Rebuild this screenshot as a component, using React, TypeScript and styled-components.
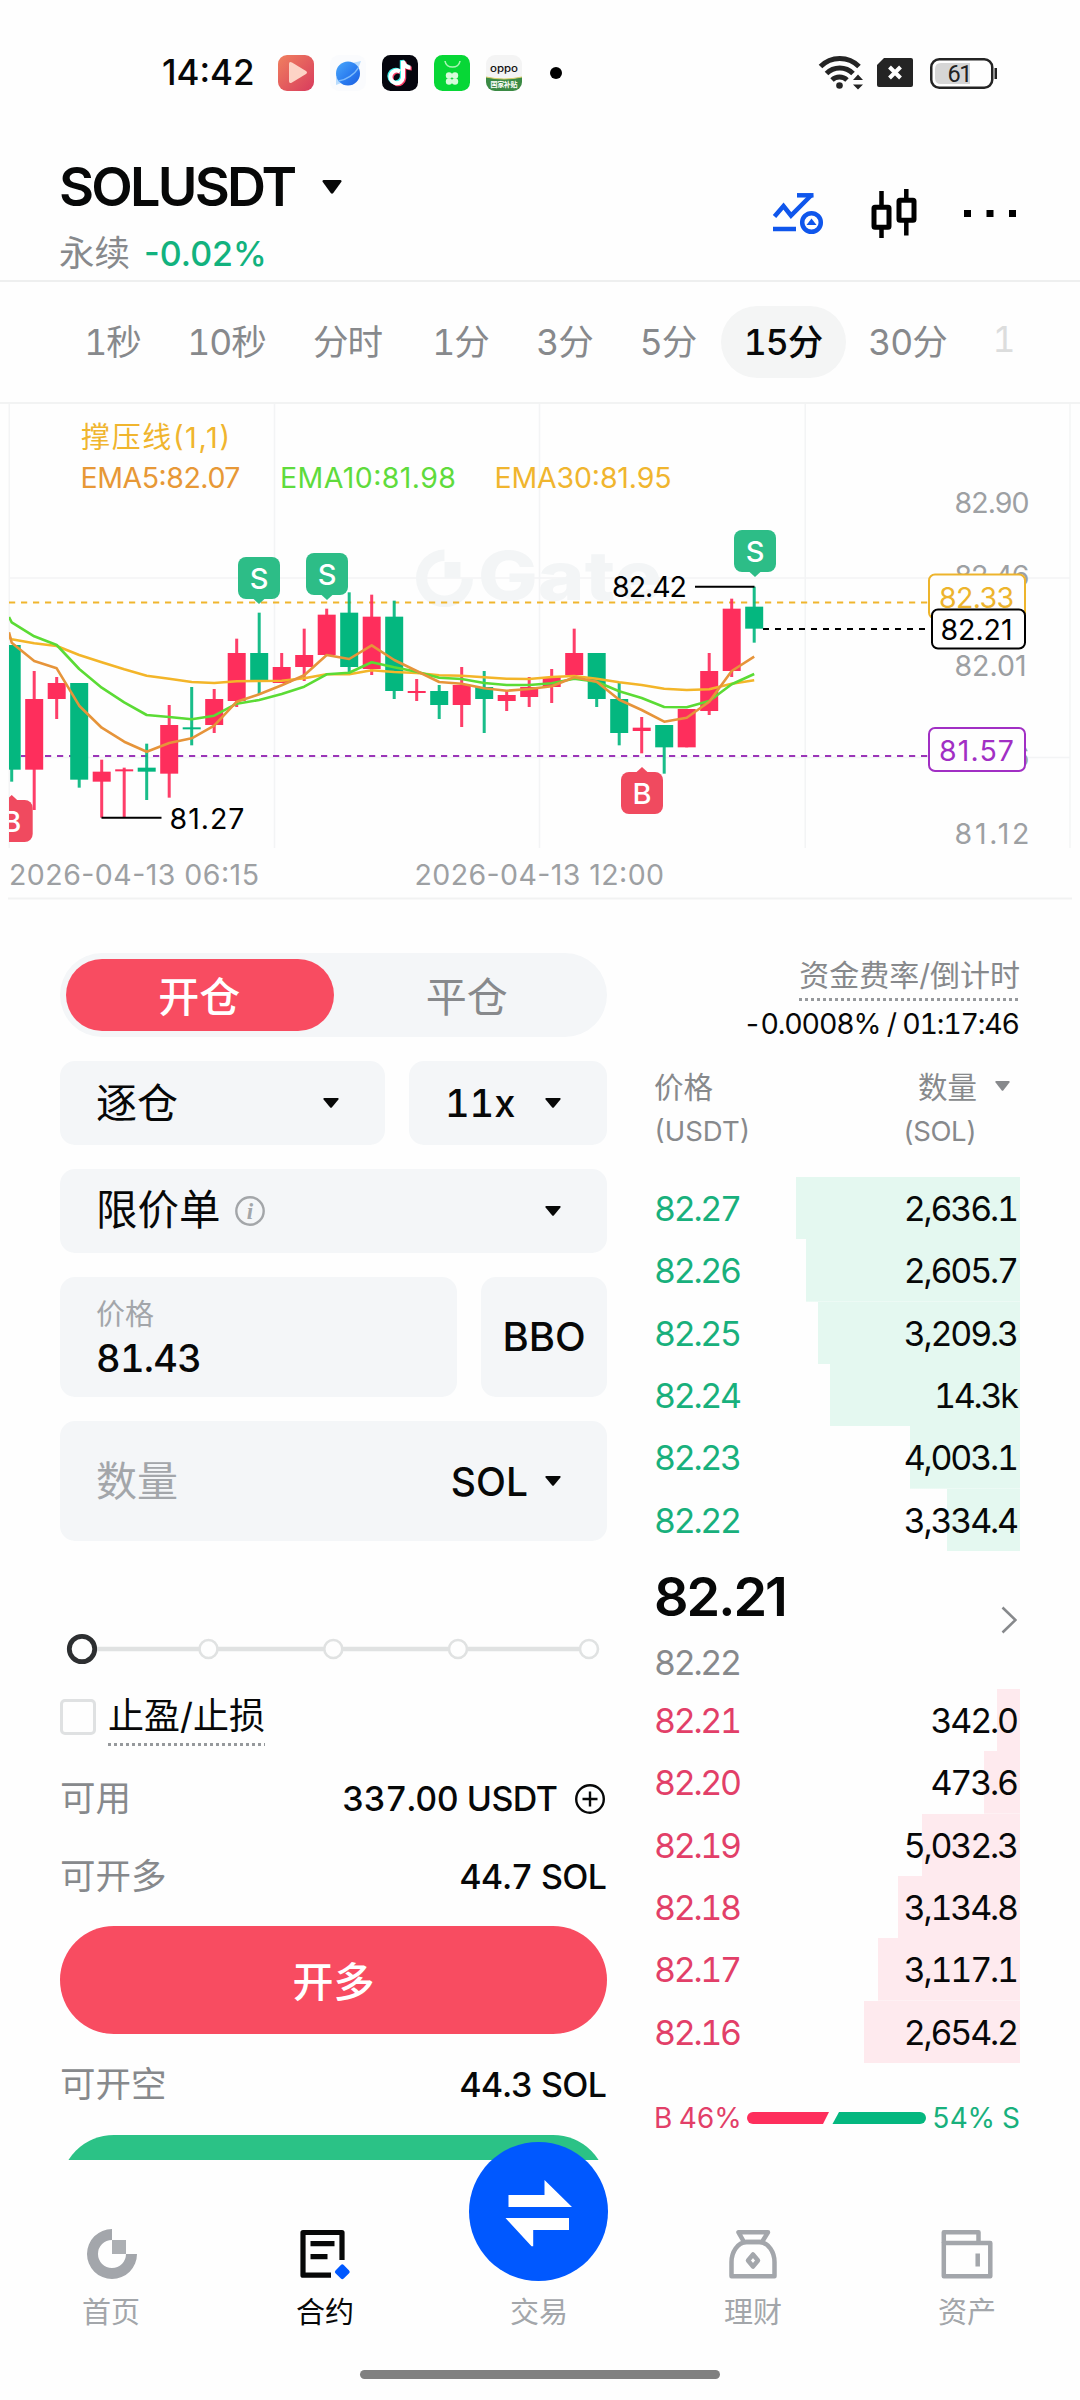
import React from "react";
import styled, { createGlobalStyle } from "styled-components";

const UP = "#04b77f";
const DOWN = "#fe2e5c";
const INK = "#070808";
const GRAY = "#87898c";
const MUTE = "#a3a6aa";
const FIELD = "#f4f6f8";

const Global = createGlobalStyle`
  *, *::before, *::after { box-sizing: border-box; }
  body {
    margin: 0;
    background: #fefefe;
    color: ${INK};
    font-family: Inter, "Noto Sans CJK SC", sans-serif;
    -webkit-font-smoothing: antialiased;
  }
  svg { display: block; flex: none; }
`;

const Screen = styled.div`
  width: 1080px;
  height: 2400px;
  display: flex;
  flex-direction: column;
  background: #fefefe;
  overflow: hidden;
`;

const Label = styled.span<{
  $size: number;
  $color?: string;
  $weight?: number;
  $ls?: number;
  $lh?: number;
  $proportional?: boolean;
}>`
  font-size: ${(p) => p.$size}px;
  line-height: ${(p) => p.$lh ?? p.$size}px;
  color: ${(p) => p.$color ?? INK};
  font-weight: ${(p) => p.$weight ?? 400};
  letter-spacing: ${(p) => p.$ls ?? 0}px;
  margin-right: ${(p) => -(p.$ls ?? 0)}px;
  white-space: nowrap;
  ${(p) => (p.$proportional ? "font-variant-numeric: normal;" : "")}
`;

/* ---------- status bar ---------- */

const StatusBar = styled.header`
  height: 145px;
  padding: 0 83px 0 162px;
  display: flex;
  align-items: center;
  justify-content: space-between;
`;
const StatusGroup = styled.div<{ $gap: number }>`
  display: flex;
  align-items: center;
  gap: ${(p) => p.$gap}px;
`;
const Clock = styled(Label)`
  width: 100px;
`;
const Dot = styled.span`
  width: 12px;
  height: 12px;
  margin-left: 12px;
  border-radius: 50%;
  background: #000;
`;

function AppIcons() {
  return (
    <>
      <svg width="36" height="36" viewBox="0 0 36 36">
        <defs>
          <linearGradient id="play" x1="0" y1="0" x2="1" y2="1">
            <stop offset="0" stopColor="#f0805f" />
            <stop offset="1" stopColor="#d83b5d" />
          </linearGradient>
        </defs>
        <rect width="36" height="36" rx="9" fill="url(#play)" />
        <path d="M11 9q0-3 3-1.500l14 8.500q2 1.500 0 3l-14 8.500q-3 1.500-3-1.500z" fill="#fdd3c6" />
      </svg>
      <svg width="36" height="36" viewBox="0 0 36 36">
        <defs>
          <linearGradient id="planet" x1="0" y1="0" x2="1" y2="1">
            <stop offset="0" stopColor="#4aa8fb" />
            <stop offset="0.55" stopColor="#2b7df0" />
            <stop offset="1" stopColor="#1b5fe0" />
          </linearGradient>
        </defs>
        <rect width="36" height="36" rx="9" fill="#fafbfd" />
        <path d="M22 8l9-2-3 8zM6 22l0 8 8-3z" fill="#b9dcfd" />
        <circle cx="18" cy="18.500" r="12" fill="url(#planet)" />
        <path d="M8.500 26C16 25 25 19 28.500 12.500" stroke="#7dbbfb" strokeWidth="1.500" fill="none" />
      </svg>
      <svg width="36" height="36" viewBox="0 0 36 36">
        <rect width="36" height="36" rx="8.500" fill="#05060e" />
        <g fill="none" strokeWidth="4">
          <path d="M18 16.500a6.300 6.300 0 1 0 3 6V6c1 4 4 6.500 7.500 6.500" stroke="#fd3f68" transform="translate(1.200 1)" />
          <path d="M18 16.500a6.300 6.300 0 1 0 3 6V6c1 4 4 6.500 7.500 6.500" stroke="#3ff0ea" transform="translate(-1.200 -.8)" />
          <path d="M18 16.500a6.300 6.300 0 1 0 3 6V6c1 4 4 6.500 7.500 6.500" stroke="#fff" />
        </g>
      </svg>
      <svg width="36" height="36" viewBox="0 0 36 36">
        <rect width="36" height="36" rx="8.500" fill="#07d736" />
        <path d="M11 6c1 8 14 8 15 0" stroke="#a9f5b5" strokeWidth="1.600" fill="none" />
        <g fill="#d9fbdc">
          <circle cx="15" cy="20.500" r="3.200" />
          <circle cx="21" cy="20.500" r="3.200" />
          <circle cx="15" cy="26.500" r="3.200" />
          <circle cx="21" cy="26.500" r="3.200" />
        </g>
      </svg>
      <svg width="36" height="36" viewBox="0 0 36 36">
        <clipPath id="oppo">
          <rect width="36" height="36" rx="9" />
        </clipPath>
        <g clipPath="url(#oppo)">
          <rect width="36" height="36" fill="#f4f4f4" />
          <path d="M0 22q18 4 36 0v14H0z" fill="#3b8a44" />
          <path d="M0 22q18 4 36 0" stroke="#d8cf6a" fill="none" />
          <text x="4" y="16.500" fontSize="9.500" fontWeight="500" textLength="28" lengthAdjust="spacingAndGlyphs" fill="#111">
            oppo
          </text>
          <text x="4.500" y="32" fontSize="7" fontWeight="700" textLength="27" fill="#fff">
            国家补贴
          </text>
        </g>
      </svg>
    </>
  );
}

function SystemIcons() {
  return (
    <svg width="180" height="36" viewBox="817 54 180 36">
      <g fill="none" stroke="#242424" strokeWidth="5">
        <path d="M820.500 65.500a27 27 0 0 1 38.500 0" />
        <path d="M826.500 72.500a18.500 18.500 0 0 1 26.500 0" />
        <path d="M832 79a11 11 0 0 1 15 0" />
      </g>
      <circle cx="839.500" cy="84.500" r="3.300" fill="#242424" />
      <path d="M853 79l5-5.500 5 5.500zM853 83.500h10l-5 5z" fill="#242424" />
      <path d="M884 57h27a2 2 0 0 1 2 2v25a2 2 0 0 1-2 2h-32a2 2 0 0 1-2-2V64z" fill="#242424" />
      <path d="M889.500 66l11 11M900.500 66l-11 11" stroke="#fff" strokeWidth="4" />
      <rect x="931.250" y="58.250" width="61" height="28.500" rx="8" fill="none" stroke="#242424" strokeWidth="2.500" />
      <path d="M941 62h29v21h-29q-6 0-6-6v-9q0-6 6-6z" fill="#d6d6d6" />
      <rect x="994.500" y="67" width="2.500" height="11" fill="#242424" />
      <text x="947.500" y="81" fontFamily="Roboto" fontSize="23.500" textLength="25" fill="#222">
        61
      </text>
    </svg>
  );
}

/* ---------- pair header ---------- */

const PairHeader = styled.section`
  height: 137px;
  padding: 12px 60px 0 59px;
  display: flex;
  justify-content: space-between;
  border-bottom: 2px solid #eeefef;
`;
const PairInfo = styled.div`
  display: flex;
  flex-direction: column;
  gap: 12px;
`;
const Line = styled.div<{ $gap: number }>`
  display: flex;
  align-items: center;
  gap: ${(p) => p.$gap}px;
`;
const HeaderIcons = styled.div`
  height: 60px;
  margin-top: 26px;
  display: flex;
  align-items: center;
`;

const Caret = ({ w = 16, h = 10, color = INK }: { w?: number; h?: number; color?: string }) => (
  <svg width={w} height={h} viewBox="0 0 16 10" preserveAspectRatio="none">
    <path d="M1.200 0h13.600q1.300.3.600 1.500L9 9.300q-1 1-2 0L.6 1.500Q-.1.300 1.200 0z" fill={color} />
  </svg>
);

/* ---------- interval tabs ---------- */

const Intervals = styled.nav`
  height: 122px;
  padding: 0 60px;
  display: flex;
  align-items: center;
  overflow: hidden;
  border-bottom: 2px solid #f2f3f3;
`;
const Interval = styled.div<{ $w: number; $on?: boolean; $faded?: boolean }>`
  flex: none;
  width: ${(p) => p.$w}px;
  height: 72px;
  padding: 0 1px 5px 0;
  display: flex;
  align-items: center;
  justify-content: center;
  border-radius: 36px;
  font-size: 35.5px;
  font-variant-numeric: tabular-nums;
  letter-spacing: -1px;
  font-weight: ${(p) => (p.$on ? 500 : 400)};
  color: ${(p) => (p.$on ? INK : p.$faded ? "#dcdddd" : GRAY)};
  background: ${(p) => (p.$on ? "#f4f5f5" : "transparent")};
`;

/* ---------- chart ---------- */

const X = (i: number) => 11.7 + i * 22.5;
const Y = (v: number) => 400 + v / 3;

// [rising, body top, body bottom, wick top, wick bottom]
const candles: [number, number, number, number, number][] = [
  [0, 735, 1109, 735, 1145], [1, 897, 1109, 813, 1230], [1, 849, 897, 831, 957],
  [0, 849, 1139, 849, 1163], [1, 1115, 1145, 1079, 1253], [1, 1108, 1114, 1103, 1253],
  [0, 1103, 1115, 1031, 1200], [1, 975, 1121, 915, 1193], [0, 982, 988, 861, 1036],
  [1, 897, 975, 867, 999], [1, 759, 903, 716, 921], [0, 759, 843, 638, 885],
  [1, 801, 849, 759, 849], [1, 765, 801, 686, 843], [1, 644, 765, 626, 765],
  [0, 638, 801, 577, 819], [1, 650, 807, 584, 825], [0, 650, 873, 602, 897],
  [1, 873, 879, 837, 903], [0, 873, 915, 855, 957], [1, 855, 915, 801, 981],
  [0, 861, 897, 813, 999], [1, 885, 903, 873, 933], [1, 861, 891, 831, 921],
  [1, 831, 861, 807, 909], [1, 759, 825, 686, 831], [0, 759, 897, 759, 921],
  [0, 897, 999, 849, 1036], [1, 983, 993, 951, 1060], [0, 975, 1042, 975, 1121],
  [1, 927, 1042, 927, 1042], [1, 813, 933, 759, 945], [1, 626, 813, 596, 831],
  [0, 620, 686, 560, 728],
];
const ema5 = [728, 783, 805, 917, 983, 1025, 1055, 1029, 1015, 977, 905, 883, 856, 826, 765, 777, 736, 780, 813, 846, 851, 865, 872, 867, 859, 832, 845, 899, 930, 965, 953, 905, 813, 770];
const ema10 = [667, 709, 735, 807, 863, 907, 945, 951, 958, 947, 911, 900, 882, 860, 823, 818, 787, 802, 815, 833, 837, 849, 855, 855, 850, 836, 845, 874, 894, 921, 922, 903, 853, 822];
const ema30 = [718, 730, 738, 765, 787, 808, 827, 836, 846, 849, 844, 843, 842, 835, 823, 823, 811, 816, 819, 826, 827, 832, 836, 837, 831, 828, 836, 847, 855, 866, 870, 868, 851, 841];

const path = (first: number, vals: number[]) =>
  `M9 ${Y(first)}` + vals.map((v, i) => `L${X(i).toFixed(1)} ${Y(v).toFixed(1)}`).join("");

const T = ({ x, y, w, c, s = 28.5, children }: { x: number; y: number; w: number; c: string; s?: number; children: string }) => (
  <text x={x} y={y} textLength={w} fontSize={s} fill={c}>
    {children}
  </text>
);

const Marker = ({ x, y, sell }: { x: number; y: number; sell?: boolean }) => (
  <g>
    <rect x={x - 21} y={y} width="42" height="42" rx="8" fill={sell ? "#2dbd87" : "#f04a5f"} />
    {sell ? (
      <path d={`M${x - 6} ${y + 41.500}h12l-6 5.500z`} fill="#2dbd87" />
    ) : (
      <path d={`M${x - 6} ${y + 0.500}h12l-6-5.500z`} fill="#f04a5f" />
    )}
    <text x={x} y={y + 31.500} fontSize="29" fontWeight="500" textAnchor="middle" fill="#fff">
      {sell ? "S" : "B"}
    </text>
  </g>
);

function Chart() {
  const axis = "#9da0a3";
  return (
    <svg width="1080" height="496" viewBox="0 404 1080 496">
      <g stroke="#f3f4f5" strokeWidth="1.500">
        {[9.3, 274.5, 539.5, 805.2, 1070].map((x) => (
          <path key={x} d={`M${x} 404V848`} />
        ))}
        <path d="M9 578H1070M9 757.500H1070" />
        <path d="M8 898.500H1072" stroke="#f1f2f2" strokeWidth="2" />
      </g>
      <g fill="#f3f5f6">
        <path d="M444.500 549.500v11.500a17.300 17.300 0 1 0 17.300 17.300h11.200a28.500 28.800 0 1 1-28.500-28.800z" />
        <rect x="444.500" y="562" width="16" height="16" />
        <text x="478" y="600" fontSize="67" fontWeight="800" textLength="184" lengthAdjust="spacingAndGlyphs">
          Gate
        </text>
      </g>
      <T x={81} y={448} w={149} c="#f0b52e" s={29}>撑压线(1,1)</T>
      <T x={80.5} y={487.5} w={160} c="#e79836">EMA5:82.07</T>
      <T x={280} y={487.5} w={176} c="#5fdb3c">EMA10:81.98</T>
      <T x={494.5} y={487.5} w={177} c="#f0b52e">EMA30:81.95</T>
      <T x={954.5} y={513} w={75} c={axis}>82.90</T>
      <T x={954.5} y={586} w={75} c={axis}>82.46</T>
      <T x={954.5} y={676} w={72} c={axis}>82.01</T>
      <T x={954.5} y={766.5} w={75} c={axis}>81.56</T>
      <T x={954.5} y={843.7} w={75} c={axis}>81.12</T>

      <path d="M9 602.500H928" stroke="#f0b52e" strokeWidth="2" strokeDasharray="6.200 5.800" />
      <path d="M9 756H928" stroke="#9b35b8" strokeWidth="2" strokeDasharray="6.200 5.800" />
      <path d="M763 629H930" stroke="#000" strokeWidth="2" strokeDasharray="6 6" />

      <clipPath id="plot">
        <rect x="9" y="404" width="1063" height="450" />
      </clipPath>
      <g clipPath="url(#plot)">
        {candles.map(([up, t, b, wt, wb], i) => (
          <g key={i} fill={up ? DOWN : UP}>
            <rect x={X(i) - 1.5} y={Y(wt)} width="3" height={(wb - wt) / 3} opacity={0.92} />
            <rect x={X(i) - 9} y={Y(t)} width="18" height={(b - t) / 3} />
          </g>
        ))}
        <g fill="none" strokeWidth="2.600" strokeLinejoin="round">
          <path d={path(712, ema30)} stroke="#f3b529" />
          <path d={path(651, ema10)} stroke="#5bdb35" />
          <path d={path(697, ema5)} stroke="#e6943a" />
        </g>
        <Marker x={11.7} y={800} />
        <Marker x={642} y={772} />
        <Marker x={259} y={557} sell />
        <Marker x={327} y={553} sell />
        <Marker x={755} y={530} sell />
      </g>
      <path d="M101.500 817.700h60M695 586.700h59.500" stroke="#000" strokeWidth="2" />
      <T x={169.5} y={828.7} w={75} c="#000">81.27</T>
      <T x={612} y={596.700} w={75} c="#000">82.42</T>

      <rect x="929" y="574.500" width="96" height="44" rx="6" fill="#fefefe" stroke="#edb42c" strokeWidth="2" />
      <T x={939} y={608} w={75} c="#edb42c">82.33</T>
      <rect x="932" y="609.500" width="93" height="39" rx="6" fill="#fefefe" stroke="#000" strokeWidth="2" />
      <T x={940.5} y={640} w={72} c="#000">82.21</T>
      <rect x="929" y="728" width="96" height="43" rx="6" fill="#fefefe" stroke="#a12fc4" strokeWidth="2" />
      <T x={939} y={760.7} w={75} c="#a12fc4">81.57</T>
      <T x={9} y={884.5} w={250} c={axis}>2026-04-13 06:15</T>
      <T x={414.500} y={884.5} w={249.5} c={axis}>2026-04-13 12:00</T>
    </svg>
  );
}

/* ---------- trading body ---------- */

const Body = styled.main`
  height: 1260px;
  padding: 53px 60px 0;
  display: flex;
  gap: 47px;
  overflow: hidden;
  font-variant-numeric: tabular-nums;
`;
const Form = styled.section`
  width: 547px;
  flex: none;
  display: flex;
  flex-direction: column;
  & > * { flex: none; }
`;
const Stack = styled.div`
  display: flex;
  flex-direction: column;
  gap: 24px;
`;
const Segment = styled.div`
  height: 84px;
  padding: 6px;
  display: flex;
  border-radius: 42px;
  background: ${FIELD};
`;
const SegmentItem = styled.div<{ $on?: boolean }>`
  flex: 1;
  padding: 0 1px 3px 0;
  display: flex;
  align-items: center;
  justify-content: center;
  border-radius: 36px;
  font-size: 41px;
  font-weight: ${(p) => (p.$on ? 500 : 400)};
  color: ${(p) => (p.$on ? "#fff" : GRAY)};
  background: ${(p) => (p.$on ? "#f84c61" : "transparent")};
`;
const Row = styled.div`
  display: flex;
  gap: 24px;
`;
const Field = styled.div<{ $h: number; $w?: number; $center?: boolean }>`
  ${(p) => (p.$w ? `width: ${p.$w}px; flex: none;` : "flex: 1;")}
  height: ${(p) => p.$h}px;
  padding: ${(p) => (p.$center ? "0" : "0 46px 0 36px")};
  display: flex;
  align-items: center;
  justify-content: ${(p) => (p.$center ? "center" : "space-between")};
  border-radius: 15px;
  background: ${FIELD};
`;
const PriceText = styled.div`
  display: flex;
  flex-direction: column;
  gap: 2px;
`;
const SliderWrap = styled.div`
  height: 36px;
  margin-top: 90px;
`;
const CheckRow = styled.div`
  height: 57px;
  margin-top: 22px;
  display: flex;
  gap: 12px;
`;
const Checkbox = styled.span`
  width: 36px;
  height: 36px;
  margin-top: 10px;
  border: 3px solid #dfe1e2;
  border-radius: 5px;
`;
const Dotted = styled.span<{ $h: number; $lh: number; $size: number; $color: string }>`
  height: ${(p) => p.$h}px;
  font-size: ${(p) => p.$size}px;
  line-height: ${(p) => p.$lh}px;
  color: ${(p) => p.$color};
  white-space: nowrap;
  background: repeating-linear-gradient(90deg, #96999c 0 3px, transparent 3px 6px) bottom / 100% 3px no-repeat;
`;
const InfoRow = styled.div<{ $h: number; $mb?: number }>`
  height: ${(p) => p.$h}px;
  margin-bottom: ${(p) => p.$mb ?? 0}px;
  display: flex;
  align-items: center;
  justify-content: space-between;
`;
const Submit = styled.div<{ $bg: string }>`
  height: 108px;
  padding-bottom: 2px;
  display: flex;
  align-items: center;
  justify-content: center;
  border-radius: 54px;
  background: ${(p) => p.$bg};
  color: #fff;
  font-size: 41px;
  font-weight: 500;
`;

/* ---------- order book ---------- */

const Book = styled.section`
  width: 366px;
  flex: none;
  display: flex;
  flex-direction: column;
`;
const Funding = styled.div`
  height: 94px;
  display: flex;
  flex-direction: column;
  align-items: flex-end;
`;
const BookHead = styled.div`
  height: 130px;
  padding-top: 19px;
  display: flex;
  justify-content: space-between;
`;
const HeadCol = styled.div<{ $right?: boolean }>`
  display: flex;
  flex-direction: column;
  text-align: ${(p) => (p.$right ? "right" : "left")};
`;
const HeadQty = styled.div`
  display: flex;
  gap: 18px;
  padding-right: 10px;
`;
const CaretSlot = styled.span`
  padding-top: 15px;
`;
const Level = styled.div<{ $fill: number; $tint: string }>`
  height: 62.33px;
  padding: 2px 1px 0 0;
  display: flex;
  align-items: center;
  justify-content: space-between;
  background: linear-gradient(${(p) => p.$tint}, ${(p) => p.$tint}) right / ${(p) => p.$fill}px 100% no-repeat;
`;
const Last = styled.div`
  height: 138px;
  padding: 16px 3px 0 0;
  display: flex;
  justify-content: space-between;
`;
const LastPrices = styled.div`
  display: flex;
  flex-direction: column;
`;
const ChevronSlot = styled.span`
  padding-top: 39px;
`;
const Ratio = styled.div`
  height: 40px;
  margin-top: 35px;
  display: flex;
  align-items: center;
  justify-content: space-between;
`;

const asks: [string, string, number][] = [
  ["82.27", "2,636.1", 224], ["82.26", "2,605.7", 214], ["82.25", "3,209.3", 202],
  ["82.24", "14.3k", 190], ["82.23", "4,003.1", 110], ["82.22", "3,334.4", 73],
];
const bids: [string, string, number][] = [
  ["82.21", "342.0", 23], ["82.20", "473.6", 36], ["82.19", "5,032.3", 98],
  ["82.18", "3,134.8", 122], ["82.17", "3,117.1", 142], ["82.16", "2,654.2", 156],
];

const Levels = ({ rows, color, tint }: { rows: [string, string, number][]; color: string; tint: string }) => (
  <>
    {rows.map(([p, q, w]) => (
      <Level key={p} $fill={w} $tint={tint}>
        <Label $size={34} $ls={-2.3} $color={color}>{p}</Label>
        <Label $size={34} $ls={-2.2}>{q}</Label>
      </Level>
    ))}
  </>
);

/* ---------- bottom navigation ---------- */

const Nav = styled.nav`
  position: relative;
  height: 240px;
  padding: 64px 6px 0 4px;
  display: flex;
  flex-direction: column;
  align-items: center;
`;
const NavItems = styled.div`
  width: 1070px;
  display: flex;
`;
const NavItem = styled.div<{ $on?: boolean }>`
  flex: 1;
  height: 114px;
  display: flex;
  flex-direction: column;
  align-items: center;
  justify-content: space-between;
  font-size: 29px;
  line-height: 50px;
  color: ${(p) => (p.$on ? INK : "#a3a6aa")};
`;
const NavSpacer = styled.span`
  height: 60px;
`;
const Fab = styled.div`
  position: absolute;
  left: 469px;
  top: -18px;
  width: 139px;
  height: 139px;
  border-radius: 50%;
  background: #0058ff;
`;
const HomeBar = styled.div`
  width: 360px;
  height: 9px;
  margin: 32px 0 0 2px;
  border-radius: 5px;
  background: #808080;
`;

export default function App() {
  return (
    <Screen>
      <Global />
      <StatusBar>
        <StatusGroup $gap={16}>
          <Clock $size={35} $weight={500}>14:42</Clock>
          <AppIcons />
          <Dot />
        </StatusGroup>
        <SystemIcons />
      </StatusBar>

      <PairHeader>
        <PairInfo>
          <Line $gap={25}>
            <Label $size={54} $weight={600} $ls={-2.8} $lh={60}>SOLUSDT</Label>
            <Caret w={20} h={14} />
          </Line>
          <Line $gap={14}>
            <Label $size={35.5} $lh={50} $color={GRAY}>永续</Label>
            <Label $size={34} $lh={50} $weight={500} $color="#12b27e">-0.02%</Label>
          </Line>
        </PairInfo>
        <HeaderIcons>
          <svg width="248" height="60" viewBox="772 183 248 60">
            <g fill="none" stroke="#0f56ec" strokeWidth="4.500">
              <path d="M774.500 216.500l9-10.500 7.500 9.500 21-21" />
              <path d="M797 195.300h16.500" />
              <path d="M773 229h23" />
              <circle cx="811.500" cy="222.500" r="9.300" />
            </g>
            <path d="M811.500 218.500l5 6.500h-10z" fill="#0f56ec" />
            <g fill="none" stroke="#000">
              <path d="M881.500 191v15M881.500 229v9M906.300 189v10M906.300 222v13.500" strokeWidth="4.500" />
              <rect x="874" y="207.300" width="15" height="20" rx="1" strokeWidth="5" />
              <rect x="899" y="200.300" width="15" height="20" rx="1" strokeWidth="5" />
            </g>
            <path d="M964 210h7v7h-7zM986.500 210h7v7h-7zM1009 210h7v7h-7z" fill="#000" />
          </svg>
        </HeaderIcons>
      </PairHeader>

      <Intervals>
        <Interval $w={106}>1秒</Interval>
        <Interval $w={122}>10秒</Interval>
        <Interval $w={120}>分时</Interval>
        <Interval $w={106}>1分</Interval>
        <Interval $w={102}>3分</Interval>
        <Interval $w={105}>5分</Interval>
        <Interval $w={125} $on>15分</Interval>
        <Interval $w={124}>30分</Interval>
        <Interval $w={68} $faded>1</Interval>
      </Intervals>

      <Chart />

      <Body>
        <Form>
          <Stack>
            <Segment>
              <SegmentItem $on>开仓</SegmentItem>
              <SegmentItem>平仓</SegmentItem>
            </Segment>
            <Row>
              <Field $h={84} $w={325}>
                <Label $size={41}>逐仓</Label>
                <Caret />
              </Field>
              <Field $h={84}>
                <Label $size={38} $weight={500}>11x</Label>
                <Caret />
              </Field>
            </Row>
            <Row>
              <Field $h={84}>
                <Line $gap={14}>
                  <Label $size={41.500}>限价单</Label>
                  <svg width="30" height="30" viewBox="0 0 30 30">
                    <circle cx="15" cy="15" r="13.700" fill="none" stroke="#a3a6a9" strokeWidth="2.400" />
                    <text x="15" y="22.500" textAnchor="middle" fontFamily="Liberation Serif" fontStyle="italic" fontWeight="700" fontSize="23" fill="#a3a6a9">
                      i
                    </text>
                  </svg>
                </Line>
                <Caret />
              </Field>
            </Row>
            <Row>
              <Field $h={120} $w={397}>
                <PriceText>
                  <Label $size={29} $lh={40} $color={MUTE}>价格</Label>
                  <Label $size={38} $lh={42} $weight={500} $ls={-0.7}>81.43</Label>
                </PriceText>
              </Field>
              <Field $h={120} $center>
                <Label $size={40} $weight={500}>BBO</Label>
              </Field>
            </Row>
            <Row>
              <Field $h={120}>
                <Label $size={41} $color={MUTE}>数量</Label>
                <Line $gap={17}>
                  <Label $size={39} $weight={500}>SOL</Label>
                  <Caret />
                </Line>
              </Field>
            </Row>
          </Stack>

          <SliderWrap>
            <svg width="547" height="36" viewBox="60 1631 547 36">
              <path d="M82 1649H589" stroke="#e0e2e2" strokeWidth="4.500" />
              {[208.5, 333.3, 458, 589].map((x) => (
                <circle key={x} cx={x} cy="1649" r="9" fill="#fefefe" stroke="#e0e2e2" strokeWidth="2.600" />
              ))}
              <circle cx="82" cy="1649" r="12.700" fill="#fefefe" stroke="#2d2f31" strokeWidth="4.800" />
            </svg>
          </SliderWrap>

          <CheckRow>
            <Checkbox />
            <Dotted $h={57} $lh={55} $size={36} $color={INK}>止盈/止损</Dotted>
          </CheckRow>

          <InfoRow $h={105}>
            <Label $size={35.5} $color={GRAY}>可用</Label>
            <Line $gap={15}>
              <Label $size={34} $weight={500} $ls={-0.55}>337.00 USDT</Label>
              <svg width="34" height="34" viewBox="0 0 34 34">
                <path d="M17 9.500v15M9.500 17h15" stroke={INK} strokeWidth="2.400" />
                <circle cx="17" cy="17" r="13.800" fill="none" stroke={INK} strokeWidth="2.400" />
              </svg>
            </Line>
          </InfoRow>
          <InfoRow $h={52} $mb={23}>
            <Label $size={35.5} $color={GRAY}>可开多</Label>
            <Label $size={34} $weight={500} $ls={-0.6}>44.7 SOL</Label>
          </InfoRow>
          <Submit $bg="#f84c61">开多</Submit>
          <InfoRow $h={101}>
            <Label $size={35.5} $color={GRAY}>可开空</Label>
            <Label $size={34} $weight={500} $ls={-0.6}>44.3 SOL</Label>
          </InfoRow>
          <Submit $bg="#2bc286" />
        </Form>

        <Book>
          <Funding>
            <Dotted $h={48} $lh={44} $size={30} $color={GRAY}>资金费率/倒计时</Dotted>
            <Label $size={28.5} $lh={46} $ls={-1.2}>-0.0008% / 01:17:46</Label>
          </Funding>
          <BookHead>
            <HeadCol>
              <Label $size={29.5} $lh={43} $color={GRAY}>价格</Label>
              <Label $size={27.5} $lh={45} $color={GRAY}>(USDT)</Label>
            </HeadCol>
            <HeadQty>
              <HeadCol $right>
                <Label $size={29.5} $lh={43} $color={GRAY}>数量</Label>
                <Label $size={27.5} $lh={45} $ls={-0.4} $color={GRAY}>(SOL)</Label>
              </HeadCol>
              <CaretSlot>
                <Caret w={15} h={10} color={GRAY} />
              </CaretSlot>
            </HeadQty>
          </BookHead>
          <Levels rows={asks} color="#18b07c" tint="#e4f8f0" />
          <Last>
            <LastPrices>
              <Label $size={54} $lh={60} $weight={600} $ls={-2} $proportional>82.21</Label>
              <Label $size={34} $lh={71} $ls={-2.3} $color={GRAY}>82.22</Label>
            </LastPrices>
            <ChevronSlot>
              <svg width="16" height="28" viewBox="0 0 16 28">
                <path d="M1.500 1.500L14.500 14 1.500 26.500" fill="none" stroke={GRAY} strokeWidth="2.600" />
              </svg>
            </ChevronSlot>
          </Last>
          <Levels rows={bids} color="#e23f68" tint="#feeaee" />
          <Ratio>
            <Label $size={28} $ls={-0.5} $color="#e23f68">B 46%</Label>
            <svg width="179" height="12" viewBox="0 0 179 12">
              <path d="M6 0H82L76 12H6A6 6 0 0 1 6 0z" fill={DOWN} />
              <path d="M92 0H173A6 6 0 0 1 173 12H85.500z" fill={UP} />
            </svg>
            <Label $size={28} $ls={-0.3} $color="#18b07c">54% S</Label>
          </Ratio>
        </Book>
      </Body>

      <Nav>
        <NavItems>
          <NavItem>
            <svg width="60" height="60" viewBox="81 2224 60 60" fill="#a3a6ab">
              <path d="M112 2229v11a14 14 0 1 0 14 14h11a25 25 0 1 1-25-25z" />
              <rect x="112" y="2240" width="14" height="14" opacity="0.9" />
            </svg>
            首页
          </NavItem>
          <NavItem $on>
            <svg width="60" height="60" viewBox="295.500 2224 60 60">
              <path d="M342.500 2260V2232.500H303.500V2275.200H331.500" fill="none" stroke={INK} strokeWidth="5.200" strokeLinejoin="round" />
              <path d="M311 2243.700h24M311 2256.700h17" stroke={INK} strokeWidth="5.200" />
              <rect x="337" y="2266" width="11.600" height="11.600" rx="2" transform="rotate(45 342.800 2271.800)" fill="#0058ff" />
            </svg>
            合约
          </NavItem>
          <NavItem>
            <NavSpacer />
            交易
          </NavItem>
          <NavItem>
            <svg width="60" height="60" viewBox="723 2224 60 60">
              <g fill="none" stroke="#a3a6ab" strokeWidth="4.500" strokeLinejoin="round">
                <path d="M738.500 2232.300H768L762 2242H744z" />
                <path d="M731.500 2276.200V2262c0-10 6-19.500 15-20h13c9 .5 15 10 15 20v14.200z" />
                <path d="M753 2254.500l5 6-5 6-5-6z" />
              </g>
            </svg>
            理财
          </NavItem>
          <NavItem>
            <svg width="60" height="60" viewBox="937 2224 60 60">
              <g fill="none" stroke="#a3a6ab" strokeWidth="4.500" strokeLinejoin="round">
                <path d="M943.800 2243V2232.300H978.500V2243" />
                <rect x="943.800" y="2243" width="46.500" height="33.200" />
                <path d="M977.700 2253.500V2266.500" />
              </g>
            </svg>
            资产
          </NavItem>
        </NavItems>
        <HomeBar />
        <Fab>
          <svg width="139" height="139" viewBox="469.500 2142 139 139">
            <path d="M509 2195h36v-15l27.500 27H509z" fill="#fff" />
            <path d="M569.500 2218H506l26 28.300h1.700V2230h35.800z" fill="#fff" />
          </svg>
        </Fab>
      </Nav>
    </Screen>
  );
}
